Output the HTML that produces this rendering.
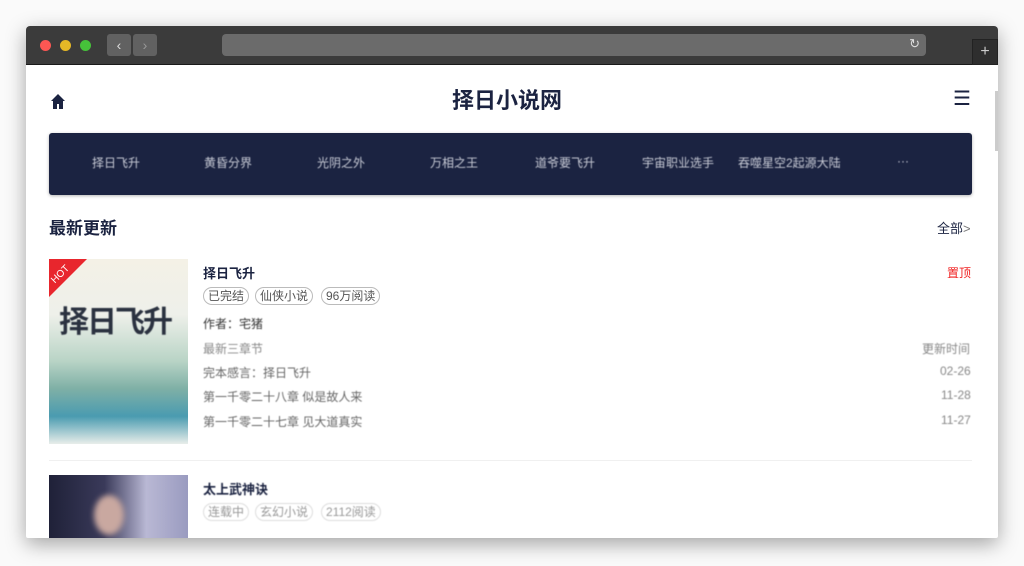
<!DOCTYPE html>
<html><head><meta charset="utf-8"><style>
*{margin:0;padding:0;box-sizing:border-box}
body{width:1024px;height:566px;background:#fafafa;font-family:"Liberation Sans","Noto Sans CJK SC",sans-serif;position:relative;overflow:hidden}
.win{position:absolute;left:26px;top:26px;width:972px;height:512px;background:#fff;box-shadow:0 6px 20px rgba(0,0,0,.35);overflow:hidden;border-radius:4px 4px 2px 2px}
.bar{position:absolute;left:0;top:0;width:972px;height:39px;background:#3b3b3b;border-bottom:1px solid #1a1a1a}
.dot{position:absolute;top:14px;width:11px;height:11px;border-radius:50%}
.nb{position:absolute;top:8px;width:24px;height:22px;background:#616161;border-radius:3px;color:#ddd;font-size:14px;text-align:center;line-height:22px}
.url{position:absolute;left:196px;top:8px;width:704px;height:22px;background:#6b6b6b;border-radius:4px}
.t{position:absolute;white-space:nowrap}
.nav{position:absolute;left:23px;top:107px;width:923px;height:62px;background:#1b2341;border-radius:3px;box-shadow:0 1px 3px rgba(0,0,0,.3)}
.nav span{position:absolute;top:21px;color:#c8cbd6;font-size:12px;filter:blur(.6px)}
.tag{position:absolute;height:18px;border:1px solid #bbb;border-radius:9px;font-size:12px;color:#555;line-height:16px;padding:0 4px}
.g{color:#666;font-size:12px;filter:blur(.5px)}
</style></head><body>
<div class="win">
<div class="bar">
<div class="dot" style="left:14px;background:#fc5753"></div>
<div class="dot" style="left:34px;background:#e5b826"></div>
<div class="dot" style="left:54px;background:#46c23a"></div>
<div class="nb" style="left:81px">&#8249;</div>
<div class="nb" style="left:107px;color:#999">&#8250;</div>
<div class="url"><span style="position:absolute;right:6px;top:2px;color:#ddd;font-size:13px">&#8635;</span></div>
<div style="position:absolute;left:946px;top:13px;width:26px;height:26px;background:#2e2e2e;border:1px solid #222;color:#ccc;text-align:center;line-height:24px;font-size:16px">+</div>
</div>
<svg class="t" style="left:24px;top:67px" width="16" height="17" viewBox="0 0 16 17"><path d="M8 1L1 8h2v8h4v-5h2v5h4V8h2z" fill="#1b2341"/></svg>
<div class="t" style="left:426px;top:57px;font-size:22px;font-weight:bold;color:#1b2341">择日小说网</div>
<div class="t" style="left:927px;top:60px;font-size:20px;color:#1b2341">&#9776;</div>
<div class="nav">
<span style="left:43px">择日飞升</span><span style="left:155px">黄昏分界</span><span style="left:268px">光阴之外</span><span style="left:381px">万相之王</span><span style="left:486px">道爷要飞升</span><span style="left:593px">宇宙职业选手</span><span style="left:689px">吞噬星空2起源大陆</span><span style="left:848px">···</span>
</div>
<div class="t" style="left:23px;top:188px;font-size:17px;font-weight:bold;color:#1b2341">最新更新</div>
<div class="t" style="left:911px;top:192px;font-size:13px;color:#1b2341">全部<span style="color:#777">&gt;</span></div>
<div class="t" style="left:23px;top:233px;width:139px;height:185px;overflow:hidden;background:linear-gradient(180deg,#f4f1e6 0%,#eef0ea 30%,#b9d4c6 55%,#7fb0a6 70%,#4a9bb0 85%,#e8eeea 100%)">
<div style="position:absolute;left:10px;top:38px;font-size:30px;color:#2b3240;font-weight:bold;letter-spacing:-2px;filter:blur(.6px)">择日飞升</div>
<div style="position:absolute;left:0;top:0;width:0;height:0;border-top:38px solid #e8262d;border-right:38px solid transparent"></div>
<div style="position:absolute;left:1px;top:10px;color:#fff;font-size:10px;transform:rotate(-45deg)">HOT</div>
</div>
<div class="t" style="left:177px;top:237px;font-size:13px;font-weight:bold;color:#1b2341">择日飞升</div>
<div class="t" style="left:921px;top:238px;font-size:12px;color:#f02020">置顶</div>
<div class="tag" style="left:177px;top:261px">已完结</div>
<div class="tag" style="left:229px;top:261px">仙侠小说</div>
<div class="tag" style="left:295px;top:261px">96万阅读</div>
<div class="t g" style="left:177px;top:289px;color:#333">作者：宅猪</div>
<div class="t g" style="left:177px;top:314px;color:#888">最新三章节</div>
<div class="t g" style="left:896px;top:314px;color:#888">更新时间</div>
<div class="t g" style="left:177px;top:338px">完本感言：择日飞升</div>
<div class="t g" style="left:914px;top:338px;color:#888">02-26</div>
<div class="t g" style="left:177px;top:362px">第一千零二十八章 似是故人来</div>
<div class="t g" style="left:915px;top:362px;color:#888">11-28</div>
<div class="t g" style="left:177px;top:387px">第一千零二十七章 见大道真实</div>
<div class="t g" style="left:915px;top:387px;color:#888">11-27</div>
<div class="t" style="left:23px;top:434px;width:923px;height:1px;background:#f0f0f0"></div>
<div class="t" style="left:23px;top:449px;width:139px;height:70px;background:linear-gradient(90deg,#1f2138 0%,#3a3a5a 40%,#b9b8d4 70%,#9a9bc0 100%)"><div style="position:absolute;left:45px;top:20px;width:30px;height:40px;border-radius:50%;background:#c9a8a0;filter:blur(3px)"></div></div>
<div class="t" style="left:177px;top:453px;font-size:13px;font-weight:bold;color:#1b2341;filter:blur(.6px)">太上武神诀</div>
<div class="tag" style="left:177px;top:477px;color:#999;border-color:#ddd;filter:blur(.6px)">连载中</div>
<div class="tag" style="left:229px;top:477px;color:#999;border-color:#ddd;filter:blur(.6px)">玄幻小说</div>
<div class="tag" style="left:295px;top:477px;color:#999;border-color:#ddd;filter:blur(.6px)">2112阅读</div>
<div class="t" style="left:969px;top:65px;width:3px;height:60px;background:#ccc"></div>
</div>
</body></html>
